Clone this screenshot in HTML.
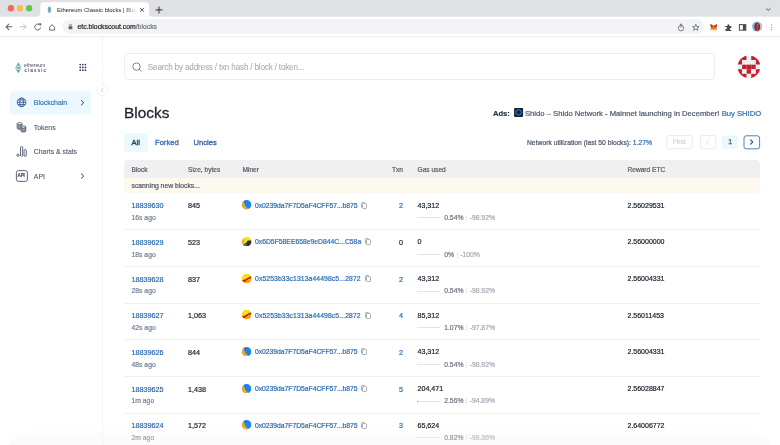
<!DOCTYPE html>
<html><head><meta charset="utf-8">
<style>
*{box-sizing:border-box;margin:0;padding:0}
html,body{width:780px;height:445px;overflow:hidden;background:#fff;-webkit-font-smoothing:antialiased;-webkit-text-stroke:0.2px currentColor;font-family:"Liberation Sans",sans-serif;color:#1a202c}
.a{position:absolute;white-space:nowrap}
#tabs{position:absolute;left:0;top:0;width:780px;height:17px;background:#dee1e6}
#tb{position:absolute;left:0;top:17px;width:780px;height:19px;background:#fff;border-bottom:1px solid #e3e3e3}
.dot{position:absolute;width:6.5px;height:6.5px;border-radius:50%}
#tab{position:absolute;left:40.5px;top:2px;width:108.5px;height:16px;background:#fff;border-radius:4px 4px 0 0}
#url{position:absolute;left:62.5px;top:20px;width:641px;height:14.6px;background:#f1f3f4;border-radius:8px}
#side{position:absolute;left:0;top:37px;width:101.5px;height:408px;border-right:1px solid #f0f0f0}
.nav{position:absolute;left:10px;width:81px;height:23px;border-radius:3px;font-size:7.2px;color:#4a5568}
.nav span{position:absolute;left:24px;top:7px}
.nv{font-size:6.9px;color:#505a6a;-webkit-text-stroke:0.12px currentColor}
.th{position:absolute;top:165.5px;font-size:6.6px;color:#535964}
.bn{font-size:6.8px;color:#2b6cb0}
.mut{color:#718096}
.row{position:absolute;left:124px;width:636px;height:37.2px;border-bottom:1px solid #eef0f3}
.t{position:absolute;font-size:6.8px;white-space:nowrap}
.mi{width:9.4px;height:9.4px;display:block}
.cpw{position:absolute;top:8.6px}
.cp{width:6px;height:7px;display:block}
.gbar{position:absolute;width:22.7px;height:1px;background:#dfe3ea}
.sep{display:inline-block;width:1px;height:6px;background:#e2e8f0;margin:0 2.6px 0 2.6px;vertical-align:-1px}
.pc{color:#6d7581}
.dl{color:#a3aab4}
</style></head><body><div id="root" style="position:absolute;left:0;top:0;width:780px;height:445px;will-change:transform">
<!-- browser chrome -->
<svg class="a" style="left:0;top:0" width="780" height="37" viewBox="0 0 780 37">
<rect x="0" y="0" width="780" height="16.8" fill="#dfe1e5"/>
<rect x="0" y="16.8" width="780" height="19.4" fill="#fff"/>
<rect x="0" y="36" width="780" height="0.8" fill="#e6e6e6"/>
<circle cx="10.9" cy="8.3" r="3.2" fill="#ec6a5e"/>
<circle cx="19.9" cy="8.3" r="3.2" fill="#f4bf4f"/>
<circle cx="29.1" cy="8.3" r="3.2" fill="#61c554"/>
<path d="M36.5 16.8 Q40.4 16.8 40.4 13.1 V5.5 Q40.4 2.2 43.7 2.2 H145.5 Q148.9 2.2 148.9 5.5 V13.1 Q148.9 16.8 152.8 16.8Z" fill="#fff"/>
<ellipse cx="49.4" cy="9.8" rx="1.6" ry="3.2" fill="#7aa6d6"/>
<path d="M49.4 6.6 L50.6 9.2 L49.4 9.8 L48.2 9.2Z" fill="#66bb6a" opacity="0.7"/>
<path d="M140.3 8.2 L143.7 11.6 M143.7 8.2 L140.3 11.6" stroke="#45474a" stroke-width="0.9" stroke-linecap="round"/>
<path d="M159 6.9 V12.9 M156 9.9 H162" stroke="#45474a" stroke-width="1.1" stroke-linecap="round"/>
<path d="M766.5 8.8 L768.3 10.4 L770.1 8.8" stroke="#45474a" stroke-width="0.9" fill="none" stroke-linecap="round"/>
<!-- nav -->
<path d="M6.2 26.8 H11.8 M8.9 24 L6.1 26.8 L8.9 29.6" stroke="#5f6368" stroke-width="1.05" fill="none" stroke-linecap="round" stroke-linejoin="round"/>
<path d="M20 26.8 H26 M23.1 23.8 L26 26.8 L23.1 29.8" stroke="#c4c7c5" stroke-width="1" fill="none" stroke-linecap="round" stroke-linejoin="round"/>
<path d="M40.2 25.2 A3 3 0 1 0 40.6 28" stroke="#5f6368" stroke-width="1" fill="none" stroke-linecap="round"/>
<path d="M38.6 23.3 L41.2 23.3 L41.2 25.9Z" fill="#5f6368"/>
<path d="M49.6 27.3 L52.1 24.6 L54.6 27.3 V30.1 H49.6Z" stroke="#5f6368" stroke-width="0.95" fill="none" stroke-linejoin="miter"/>
<rect x="62.4" y="19.4" width="641.5" height="14.3" rx="7.15" fill="#f1f3f4"/>
<rect x="68.6" y="26.3" width="3.8" height="3" rx="0.4" fill="#5f6368"/>
<path d="M69.4 26.5 V25.5 A1.1 1.1 0 0 1 71.6 25.5 V26.5" stroke="#5f6368" stroke-width="0.8" fill="none"/>
<!-- right icons -->
<circle cx="681" cy="28.2" r="2.7" stroke="#6f7275" stroke-width="0.9" fill="none"/>
<path d="M681 23.8 V27.5 M679.8 25 L681 23.8 L682.2 25" stroke="#6f7275" stroke-width="0.9" fill="none"/>
<path d="M695.8 24.3 L696.7 26.5 L699 26.6 L697.2 28 L697.9 30.3 L695.8 29 L693.7 30.3 L694.4 28 L692.6 26.6 L694.9 26.5Z" stroke="#5f6368" stroke-width="0.8" fill="none" stroke-linejoin="round"/>
<path d="M710.3 24 L713.4 25.8 L714 25.8 L717.1 24 L716.4 27.5 L717 30 L714.8 30.3 L713.7 29.6 L711.6 30.3 L710.4 30 L711 27.5Z" fill="#e2761b"/>
<path d="M710.3 24 L713.4 25.8 L712 27.6 L711 27.5Z M717.1 24 L714 25.8 L715.4 27.6 L716.4 27.5Z" fill="#cd2424"/>
<path d="M711.3 28.6 L713.7 29.6 L715.9 28.6 L716.5 30.1 L713.7 30.6 L710.9 30.1Z" fill="#f6c343"/>
<path d="M725.4 26.1 H727.4 V25.3 A1 1 0 0 1 729.4 25.3 V26.1 H731.4 V28 H730.8 A1 1 0 0 0 730.8 30 H731.4 V31 H725.4 V29 H726 A1 1 0 0 0 726 27 H725.4Z" fill="#474c55"/>
<rect x="739.4" y="24.6" width="6.4" height="5.6" stroke="#474c55" stroke-width="1" fill="none"/>
<rect x="742.9" y="24.6" width="2.9" height="5.6" fill="#474c55"/>
<circle cx="757.1" cy="26.6" r="5" fill="#86b3e6"/>
<path d="M762.1 26.6 A5 5 0 0 1 758 31.5 L758 22 A5 5 0 0 1 762.1 26.6Z" fill="#b9c2cc"/>
<ellipse cx="757.2" cy="26.8" rx="2.9" ry="4.1" fill="#3f444c"/>
<path d="M756.3 24.2 Q757.3 23.3 758.5 24.2 L758.7 27 L758.3 30.6 L755.8 30.6 L756.2 27Z" fill="#d42a2a"/>
<circle cx="757.4" cy="24.8" r="0.5" fill="#f4c430"/>
<circle cx="771.6" cy="24.8" r="0.55" fill="#5f6368"/>
<circle cx="771.6" cy="27.2" r="0.55" fill="#5f6368"/>
<circle cx="771.6" cy="29.6" r="0.55" fill="#5f6368"/>
</svg>
<div class="a" style="left:56.9px;top:6.6px;width:80px;overflow:hidden;font-size:5.9px;color:#3c4043;-webkit-text-stroke:0.05px;-webkit-mask-image:linear-gradient(90deg,#000 85%,transparent)">Ethereum Classic blocks | Blocks</div>
<div class="a" style="left:77.5px;top:23.4px;font-size:6.85px;color:#202124">etc.blockscout.com<span style="color:#6f7378">/blocks</span></div>

<!-- sidebar -->
<div class="a" style="left:101.6px;top:37px;width:1px;height:408px;background:#f3f4f6"></div>
<svg class="a" style="left:0;top:37px" width="112" height="160" viewBox="0 37 112 160">
<!-- logo -->
<path d="M18.35 62.8 L21.1 67.75 L18.35 72.7 L15.6 67.75Z" fill="#c9daf2" stroke="#7aa0da" stroke-width="0.6"/>
<path d="M18.35 62.8 L19.8 65.4 L16.9 65.4Z" fill="#3cc04a"/>
<path d="M16.5 67.2 H20.2 L19.5 68.4 H17.2Z" fill="#3cc04a"/>
<path d="M18.35 72.7 L19.8 70.1 L16.9 70.1Z" fill="#3cc04a"/>
<!-- grid -->
<g fill="#2d3748">
<circle cx="80.2" cy="64.6" r="0.85"/><circle cx="82.8" cy="64.6" r="0.85"/><circle cx="85.4" cy="64.6" r="0.85"/>
<circle cx="80.2" cy="67.4" r="0.85"/><circle cx="82.8" cy="67.4" r="0.85"/><circle cx="85.4" cy="67.4" r="0.85"/>
<circle cx="80.2" cy="70.2" r="0.85"/><circle cx="82.8" cy="70.2" r="0.85"/><circle cx="85.4" cy="70.2" r="0.85"/>
</g>
<!-- collapse -->
<circle cx="102.3" cy="90" r="5.6" fill="#fff" stroke="#eceef1" stroke-width="0.7"/>
<path d="M103.3 87.9 L101.3 90 L103.3 92.1" stroke="#b4bac3" stroke-width="0.7" fill="none" stroke-linecap="round"/>
<!-- blockchain bg -->
<rect x="9.8" y="91.2" width="81.2" height="23" rx="2.5" fill="#ebf8ff"/>
<!-- globe -->
<g stroke="#355a8e" stroke-width="0.9" fill="none">
<circle cx="21.6" cy="102.3" r="4.3"/>
<ellipse cx="21.6" cy="102.3" rx="1.9" ry="4.3"/>
<path d="M17.3 102.3 H25.9 M18 100 H25.2 M18 104.6 H25.2"/>
</g>
<path d="M81.4 100.6 L83.7 102.8 L81.4 105" stroke="#2d3748" stroke-width="1" fill="none" stroke-linecap="round" stroke-linejoin="round"/>
<!-- tokens -->
<g stroke="#556070" stroke-width="0.9">
<path d="M17.2 123.7 V128.2 A2.4 1.1 0 0 0 22 128.2 V123.7Z" fill="#8a94a3"/>
<ellipse cx="19.6" cy="123.7" rx="2.4" ry="1.1" fill="#fff"/>
<path d="M21 127 V131 A2.4 1.1 0 0 0 25.8 131 V127Z" fill="#8a94a3"/>
<ellipse cx="23.4" cy="127" rx="2.4" ry="1.1" fill="#fff"/>
</g>
<!-- charts -->
<g stroke="#4a5568" stroke-width="0.9" fill="none">
<rect x="20.5" y="146.5" width="2.2" height="9.8" rx="1.1"/>
<rect x="24.1" y="149.5" width="2.2" height="6.8" rx="1.1"/>
<circle cx="18" cy="155.2" r="1.1"/>
</g>
<!-- api -->
<rect x="16.4" y="170.6" width="11" height="10.8" rx="2" stroke="#4a5568" stroke-width="0.9" fill="none"/>
<path d="M81.4 173.9 L83.7 176.1 L81.4 178.3" stroke="#2d3748" stroke-width="1" fill="none" stroke-linecap="round" stroke-linejoin="round"/>
</svg>
<div class="a" style="left:24.1px;top:61.9px;font-size:5.2px;color:#4a5260;letter-spacing:-0.1px;-webkit-text-stroke:0">ethereum</div>
<div class="a" style="left:24.4px;top:67.9px;font-size:4.8px;color:#4a5260;letter-spacing:1.2px;-webkit-text-stroke:0.1px">classic</div>
<div class="a" style="left:17.6px;top:173.2px;font-size:4.6px;font-weight:bold;color:#4a5568;letter-spacing:-0.2px">API</div>
<div class="a nv" style="left:33.8px;top:99.2px;color:#2b6cb0">Blockchain</div>
<div class="a nv" style="left:33.8px;top:124.2px">Tokens</div>
<div class="a nv" style="left:33.8px;top:148px">Charts &amp; stats</div>
<div class="a nv" style="left:33.8px;top:172.6px">API</div>

<!-- main -->
<div class="a" style="left:124.1px;top:53px;width:591.3px;height:27.3px;border:1px solid #eceef1;border-radius:4px"></div>
<svg class="a" style="left:0;top:0" width="780" height="160" viewBox="0 0 780 160">
<circle cx="136.5" cy="66.6" r="3.7" stroke="#718096" stroke-width="0.95" fill="none"/>
<path d="M139.2 69.3 L141.2 71.3" stroke="#718096" stroke-width="1" stroke-linecap="round"/>
<defs><clipPath id="idc"><circle cx="748.95" cy="66.8" r="11.4"/></clipPath></defs>
<g clip-path="url(#idc)"><rect x="737.50" y="55.50" width="4.63" height="4.63" fill="#c4212b"/><rect x="742.08" y="55.50" width="4.63" height="4.63" fill="#c4212b"/><rect x="746.66" y="55.50" width="4.63" height="4.63" fill="#e9f1f5"/><rect x="751.24" y="55.50" width="4.63" height="4.63" fill="#c4212b"/><rect x="755.82" y="55.50" width="4.63" height="4.63" fill="#c4212b"/><rect x="737.50" y="60.08" width="4.63" height="4.63" fill="#c4212b"/><rect x="742.08" y="60.08" width="4.63" height="4.63" fill="#e9f1f5"/><rect x="746.66" y="60.08" width="4.63" height="4.63" fill="#e9f1f5"/><rect x="751.24" y="60.08" width="4.63" height="4.63" fill="#e9f1f5"/><rect x="755.82" y="60.08" width="4.63" height="4.63" fill="#c4212b"/><rect x="737.50" y="64.66" width="4.63" height="4.63" fill="#e9f1f5"/><rect x="742.08" y="64.66" width="4.63" height="4.63" fill="#c4212b"/><rect x="746.66" y="64.66" width="4.63" height="4.63" fill="#c4212b"/><rect x="751.24" y="64.66" width="4.63" height="4.63" fill="#c4212b"/><rect x="755.82" y="64.66" width="4.63" height="4.63" fill="#e9f1f5"/><rect x="737.50" y="69.24" width="4.63" height="4.63" fill="#c4212b"/><rect x="742.08" y="69.24" width="4.63" height="4.63" fill="#e9f1f5"/><rect x="746.66" y="69.24" width="4.63" height="4.63" fill="#c4212b"/><rect x="751.24" y="69.24" width="4.63" height="4.63" fill="#e9f1f5"/><rect x="755.82" y="69.24" width="4.63" height="4.63" fill="#c4212b"/><rect x="737.50" y="73.82" width="4.63" height="4.63" fill="#c4212b"/><rect x="742.08" y="73.82" width="4.63" height="4.63" fill="#c4212b"/><rect x="746.66" y="73.82" width="4.63" height="4.63" fill="#e9f1f5"/><rect x="751.24" y="73.82" width="4.63" height="4.63" fill="#c4212b"/><rect x="755.82" y="73.82" width="4.63" height="4.63" fill="#c4212b"/></g>
<rect x="514.1" y="107.9" width="9" height="9" rx="0.8" fill="#1a2230"/>
<circle cx="518.6" cy="112.4" r="2.7" stroke="#1e88ff" stroke-width="1" fill="none"/>
<rect x="666.8" y="135.6" width="25.6" height="13.2" rx="2.2" stroke="#dfe6ee" stroke-width="0.8" fill="none"/>
<rect x="700.6" y="135.6" width="15.2" height="13.2" rx="2.2" stroke="#dfe6ee" stroke-width="0.8" fill="none"/>
<path d="M708.8 140 L706.6 142.2 L708.8 144.4" stroke="#cbd5e0" stroke-width="0.8" fill="none" stroke-linecap="round"/>
<rect x="721.9" y="135.4" width="16.1" height="13.6" rx="2.2" fill="#ebf8ff"/>
<rect x="744" y="135.8" width="15.6" height="13" rx="2.2" stroke="#3f72b4" stroke-width="0.9" fill="none"/>
<path d="M750.6 139.8 L752.8 142 L750.6 144.2" stroke="#2c5282" stroke-width="1.1" fill="none" stroke-linecap="round" stroke-linejoin="round"/>
</svg>
<div class="a" style="left:147.8px;top:63.2px;font-size:8.2px;letter-spacing:-0.2px;color:#a3a8b0;-webkit-text-stroke:0.05px">Search by address / txn hash / block / token...</div>
<div class="a" style="left:124px;top:103.6px;font-size:15.4px;color:#1d2330;-webkit-text-stroke:0.3px">Blocks</div>
<div class="a" style="left:493px;top:109px;font-size:7.6px;font-weight:bold;color:#2d3748">Ads:</div>
<div class="a" style="left:525px;top:109px;font-size:7.67px;color:#4a5568">Shido – Shido Network - Mainnet launching in December! <span style="color:#2b6cb0">Buy SHIDO</span></div>
<div class="a" style="left:527px;top:138.5px;font-size:6.75px;color:#4a5568">Network utilization (last 50 blocks): <span style="color:#2b6cb0">1.27%</span></div>
<div class="a" style="left:672.8px;top:137.8px;font-size:6.6px;color:#cdd6e1">First</div>
<div class="a" style="left:728.2px;top:137.6px;font-size:6.9px;color:#3d5f8e;-webkit-text-stroke:0.25px currentColor">1</div>

<div class="a" style="left:124px;top:133px;width:24px;height:18.5px;background:#ebf8ff;border-radius:3px"></div>
<div class="a" style="left:131.5px;top:138px;font-size:7.6px;color:#2d3e56;-webkit-text-stroke:0.35px currentColor">All</div>
<div class="a" style="left:155px;top:138px;font-size:7.6px;color:#3d72b8;-webkit-text-stroke:0.35px currentColor">Forked</div>
<div class="a" style="left:193.5px;top:138px;font-size:7.6px;color:#3d6aa6;-webkit-text-stroke:0.35px currentColor">Uncles</div>

<div class="a" style="left:124px;top:160.3px;width:636px;height:17.9px;background:#f0f0f0;border-radius:4px 4px 0 0"></div>
<div class="a" style="left:124px;top:178.2px;width:636px;height:14.8px;background:#fef9ee"></div>
<div class="th" style="left:131.5px">Block</div>
<div class="th" style="left:188px">Size, bytes</div>
<div class="th" style="left:242.5px">Miner</div>
<div class="th" style="left:392px">Txn</div>
<div class="th" style="left:417.5px">Gas used</div>
<div class="th" style="left:627.5px">Reward ETC</div>
<div class="a" style="left:131.5px;top:182px;font-size:6.8px;color:#4a5568">scanning new blocks...</div>

<div id="rows"><div class="row" style="top:193.00px"><div class="t bn" style="left:7.5px;top:8.2px;font-size:7.2px">18839630</div><div class="t mut" style="left:7.5px;top:21px">16s ago</div><div class="t" style="left:64px;top:8.2px;font-size:7.2px">845</div><div style="position:absolute;left:118.3px;top:7.2px"><svg class="mi" viewBox="0 0 10 10"><defs><clipPath id="c0"><circle cx="5" cy="5" r="5"/></clipPath></defs><g clip-path="url(#c0)"><rect width="10" height="10" fill="#1a86f0"/><path d="M2.4 0.9 Q1.6 6.8 7.6 9.7 L6 11 L-1 11 L-1 0Z" fill="#f8a913"/><circle cx="3.3" cy="1.6" r="0.95" fill="#d0262e"/></g></svg></div><div class="t bn" style="left:131px;top:8.5px;letter-spacing:-0.035px">0x0239da7F7D5aF4CFF57...b875</div><div class="cpw" style="left:237px"><svg class="cp" viewBox="0 0 6 7"><path d="M0.5 5.6 V1.2 Q0.5 0.5 1.2 0.5 H3.6" fill="none" stroke="#9ea5af" stroke-width="0.9"/><rect x="1.5" y="1.6" width="4" height="4.9" rx="0.7" fill="none" stroke="#9ea5af" stroke-width="0.9"/></svg></div><div class="t bn" style="right:357px;top:8.2px;font-size:7.2px">2</div><div class="t" style="left:293.5px;top:8.7px;font-size:7.1px">43,312</div><div class="gbar" style="left:293.4px;top:24.4px"></div><div class="t pc" style="left:320.2px;top:21px">0.54%<span class="sep"></span><span class="dl">-98.92%</span></div><div class="t" style="left:503.5px;top:8.7px;font-size:7px">2.56029531</div></div><div class="row" style="top:229.67px"><div class="t bn" style="left:7.5px;top:8.2px;font-size:7.2px">18839629</div><div class="t mut" style="left:7.5px;top:21px">18s ago</div><div class="t" style="left:64px;top:8.2px;font-size:7.2px">523</div><div style="position:absolute;left:118.3px;top:7.2px"><svg class="mi" viewBox="0 0 10 10"><defs><clipPath id="c1"><circle cx="5" cy="5" r="5"/></clipPath></defs><g clip-path="url(#c1)"><rect width="10" height="10" fill="#f6e40e"/><path d="M-1 1.5 L2.4 2.6 L2.2 7.4 L-1 8Z" fill="#f6a11a"/><path d="M1.5 8 L4.2 6.3 L6.4 3.5 L8.2 3.9 L10.5 2.8 L10.5 11 L0 11Z" fill="#2b3140"/><path d="M1 8.3 L4 6.8 L5.5 8 L3 11 L0 11Z" fill="#5e6674"/><path d="M1 9.5 H9 V11 H1Z" fill="#8fb2d8" opacity="0.6"/></g></svg></div><div class="t bn" style="left:131px;top:8.5px;letter-spacing:0px">0x6D5F58EE658e9eD844C...C58a</div><div class="cpw" style="left:240.6px"><svg class="cp" viewBox="0 0 6 7"><path d="M0.5 5.6 V1.2 Q0.5 0.5 1.2 0.5 H3.6" fill="none" stroke="#9ea5af" stroke-width="0.9"/><rect x="1.5" y="1.6" width="4" height="4.9" rx="0.7" fill="none" stroke="#9ea5af" stroke-width="0.9"/></svg></div><div class="t " style="right:357px;top:8.2px;font-size:7.2px">0</div><div class="t" style="left:293.5px;top:8.7px;font-size:7.1px">0</div><div class="gbar" style="left:293.4px;top:24.4px"></div><div class="t pc" style="left:320.2px;top:21px">0%<span class="sep"></span><span class="dl">-100%</span></div><div class="t" style="left:503.5px;top:8.7px;font-size:7px">2.56000000</div></div><div class="row" style="top:266.34px"><div class="t bn" style="left:7.5px;top:8.2px;font-size:7.2px">18839628</div><div class="t mut" style="left:7.5px;top:21px">28s ago</div><div class="t" style="left:64px;top:8.2px;font-size:7.2px">837</div><div style="position:absolute;left:118.3px;top:7.2px"><svg class="mi" viewBox="0 0 10 10"><defs><clipPath id="c2"><circle cx="5" cy="5" r="5"/></clipPath></defs><g clip-path="url(#c2)"><rect width="10" height="10" fill="#f6a00d"/><path d="M-1 -1 L11 -1 L11 2 Q7.5 2.8 5.5 4.5 Q3.5 6.5 -1 6.6Z" fill="#f2e60b"/><path d="M11 2 Q7.5 2.8 5.5 4.5 Q3.5 6.5 -1 6.6 L-1 8.5 Q3 9 4.8 6.8 Q6.8 4.6 11 4.3Z" fill="#cc1428"/></g></svg></div><div class="t bn" style="left:131px;top:8.5px;letter-spacing:0.1px">0x5253b33c1313a44498c5...2872</div><div class="cpw" style="left:240.5px"><svg class="cp" viewBox="0 0 6 7"><path d="M0.5 5.6 V1.2 Q0.5 0.5 1.2 0.5 H3.6" fill="none" stroke="#9ea5af" stroke-width="0.9"/><rect x="1.5" y="1.6" width="4" height="4.9" rx="0.7" fill="none" stroke="#9ea5af" stroke-width="0.9"/></svg></div><div class="t bn" style="right:357px;top:8.2px;font-size:7.2px">2</div><div class="t" style="left:293.5px;top:8.7px;font-size:7.1px">43,312</div><div class="gbar" style="left:293.4px;top:24.4px"></div><div class="t pc" style="left:320.2px;top:21px">0.54%<span class="sep"></span><span class="dl">-98.92%</span></div><div class="t" style="left:503.5px;top:8.7px;font-size:7px">2.56004331</div></div><div class="row" style="top:303.01px"><div class="t bn" style="left:7.5px;top:8.2px;font-size:7.2px">18839627</div><div class="t mut" style="left:7.5px;top:21px">42s ago</div><div class="t" style="left:64px;top:8.2px;font-size:7.2px">1,063</div><div style="position:absolute;left:118.3px;top:7.2px"><svg class="mi" viewBox="0 0 10 10"><defs><clipPath id="c3"><circle cx="5" cy="5" r="5"/></clipPath></defs><g clip-path="url(#c3)"><rect width="10" height="10" fill="#f6a00d"/><path d="M-1 -1 L11 -1 L11 2 Q7.5 2.8 5.5 4.5 Q3.5 6.5 -1 6.6Z" fill="#f2e60b"/><path d="M11 2 Q7.5 2.8 5.5 4.5 Q3.5 6.5 -1 6.6 L-1 8.5 Q3 9 4.8 6.8 Q6.8 4.6 11 4.3Z" fill="#cc1428"/></g></svg></div><div class="t bn" style="left:131px;top:8.5px;letter-spacing:0.1px">0x5253b33c1313a44498c5...2872</div><div class="cpw" style="left:240.5px"><svg class="cp" viewBox="0 0 6 7"><path d="M0.5 5.6 V1.2 Q0.5 0.5 1.2 0.5 H3.6" fill="none" stroke="#9ea5af" stroke-width="0.9"/><rect x="1.5" y="1.6" width="4" height="4.9" rx="0.7" fill="none" stroke="#9ea5af" stroke-width="0.9"/></svg></div><div class="t bn" style="right:357px;top:8.2px;font-size:7.2px">4</div><div class="t" style="left:293.5px;top:8.7px;font-size:7.1px">85,312</div><div class="gbar" style="left:293.4px;top:24.4px"></div><div class="t pc" style="left:320.2px;top:21px">1.07%<span class="sep"></span><span class="dl">-97.87%</span></div><div class="t" style="left:503.5px;top:8.7px;font-size:7px">2.56011453</div></div><div class="row" style="top:339.68px"><div class="t bn" style="left:7.5px;top:8.2px;font-size:7.2px">18839626</div><div class="t mut" style="left:7.5px;top:21px">48s ago</div><div class="t" style="left:64px;top:8.2px;font-size:7.2px">844</div><div style="position:absolute;left:118.3px;top:7.2px"><svg class="mi" viewBox="0 0 10 10"><defs><clipPath id="c4"><circle cx="5" cy="5" r="5"/></clipPath></defs><g clip-path="url(#c4)"><rect width="10" height="10" fill="#1a86f0"/><path d="M2.4 0.9 Q1.6 6.8 7.6 9.7 L6 11 L-1 11 L-1 0Z" fill="#f8a913"/><circle cx="3.3" cy="1.6" r="0.95" fill="#d0262e"/></g></svg></div><div class="t bn" style="left:131px;top:8.5px;letter-spacing:-0.035px">0x0239da7F7D5aF4CFF57...b875</div><div class="cpw" style="left:237px"><svg class="cp" viewBox="0 0 6 7"><path d="M0.5 5.6 V1.2 Q0.5 0.5 1.2 0.5 H3.6" fill="none" stroke="#9ea5af" stroke-width="0.9"/><rect x="1.5" y="1.6" width="4" height="4.9" rx="0.7" fill="none" stroke="#9ea5af" stroke-width="0.9"/></svg></div><div class="t bn" style="right:357px;top:8.2px;font-size:7.2px">2</div><div class="t" style="left:293.5px;top:8.7px;font-size:7.1px">43,312</div><div class="gbar" style="left:293.4px;top:24.4px"></div><div class="t pc" style="left:320.2px;top:21px">0.54%<span class="sep"></span><span class="dl">-98.92%</span></div><div class="t" style="left:503.5px;top:8.7px;font-size:7px">2.56004331</div></div><div class="row" style="top:376.35px"><div class="t bn" style="left:7.5px;top:8.2px;font-size:7.2px">18839625</div><div class="t mut" style="left:7.5px;top:21px">1m ago</div><div class="t" style="left:64px;top:8.2px;font-size:7.2px">1,438</div><div style="position:absolute;left:118.3px;top:7.2px"><svg class="mi" viewBox="0 0 10 10"><defs><clipPath id="c5"><circle cx="5" cy="5" r="5"/></clipPath></defs><g clip-path="url(#c5)"><rect width="10" height="10" fill="#1a86f0"/><path d="M2.4 0.9 Q1.6 6.8 7.6 9.7 L6 11 L-1 11 L-1 0Z" fill="#f8a913"/><circle cx="3.3" cy="1.6" r="0.95" fill="#d0262e"/></g></svg></div><div class="t bn" style="left:131px;top:8.5px;letter-spacing:-0.035px">0x0239da7F7D5aF4CFF57...b875</div><div class="cpw" style="left:237px"><svg class="cp" viewBox="0 0 6 7"><path d="M0.5 5.6 V1.2 Q0.5 0.5 1.2 0.5 H3.6" fill="none" stroke="#9ea5af" stroke-width="0.9"/><rect x="1.5" y="1.6" width="4" height="4.9" rx="0.7" fill="none" stroke="#9ea5af" stroke-width="0.9"/></svg></div><div class="t bn" style="right:357px;top:8.2px;font-size:7.2px">5</div><div class="t" style="left:293.5px;top:8.7px;font-size:7.1px">204,471</div><div class="gbar" style="left:293.4px;top:24.4px"><i style="position:absolute;left:0;top:0;width:0.8px;height:1px;background:#7a8290"></i></div><div class="t pc" style="left:320.2px;top:21px">2.56%<span class="sep"></span><span class="dl">-94.89%</span></div><div class="t" style="left:503.5px;top:8.7px;font-size:7px">2.56028847</div></div><div class="row" style="top:413.02px"><div class="t bn" style="left:7.5px;top:8.2px;font-size:7.2px">18839624</div><div class="t mut" style="left:7.5px;top:21px">2m ago</div><div class="t" style="left:64px;top:8.2px;font-size:7.2px">1,572</div><div style="position:absolute;left:118.3px;top:7.2px"><svg class="mi" viewBox="0 0 10 10"><defs><clipPath id="c6"><circle cx="5" cy="5" r="5"/></clipPath></defs><g clip-path="url(#c6)"><rect width="10" height="10" fill="#1a86f0"/><path d="M2.4 0.9 Q1.6 6.8 7.6 9.7 L6 11 L-1 11 L-1 0Z" fill="#f8a913"/><circle cx="3.3" cy="1.6" r="0.95" fill="#d0262e"/></g></svg></div><div class="t bn" style="left:131px;top:8.5px;letter-spacing:-0.035px">0x0239da7F7D5aF4CFF57...b875</div><div class="cpw" style="left:237px"><svg class="cp" viewBox="0 0 6 7"><path d="M0.5 5.6 V1.2 Q0.5 0.5 1.2 0.5 H3.6" fill="none" stroke="#9ea5af" stroke-width="0.9"/><rect x="1.5" y="1.6" width="4" height="4.9" rx="0.7" fill="none" stroke="#9ea5af" stroke-width="0.9"/></svg></div><div class="t bn" style="right:357px;top:8.2px;font-size:7.2px">3</div><div class="t" style="left:293.5px;top:8.7px;font-size:7.1px">65,624</div><div class="gbar" style="left:293.4px;top:24.4px"></div><div class="t pc" style="left:320.2px;top:21px">0.82%<span class="sep"></span><span class="dl">-98.36%</span></div><div class="t" style="left:503.5px;top:8.7px;font-size:7px">2.64006772</div></div></div><!--/rows-->
<div class="a" style="left:9px;top:430px;width:762px;height:30px;border-radius:32px 32px 0 0/16px 16px 0 0;background:linear-gradient(180deg,rgba(246,247,248,0.2),rgba(242,243,245,0.35) 40%,rgba(236,238,240,0.6) 80%,rgba(230,232,235,0.8))"></div>
</div></body></html>
